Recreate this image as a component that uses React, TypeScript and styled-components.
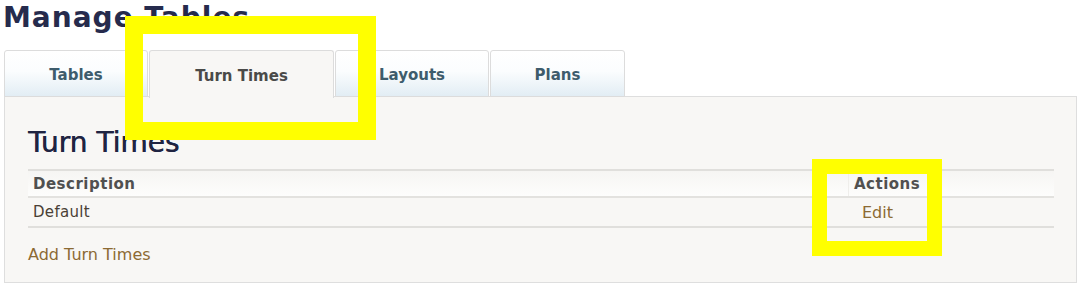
import React from "react";
import styled, { createGlobalStyle } from "styled-components";

const Global = createGlobalStyle`
  html, body { margin: 0; padding: 0; background: #ffffff; }
  body { font-family: "DejaVu Sans", Verdana, sans-serif; }
`;

const Page = styled.div`
  position: relative;
  width: 1081px;
  height: 292px;
  overflow: hidden;
  background: #ffffff;
`;

const Title = styled.h1`
  margin: 2px 0 0 3px;
  font-size: 28px;
  line-height: 32px;
  font-weight: bold;
  color: #262b4d;
  letter-spacing: 1px;
`;

const TabBar = styled.div`
  display: flex;
  margin: 16px 0 0 4px;
  height: 47px;
  position: relative;
  z-index: 1;
`;

const Tab = styled.div<{ $w: number; $active?: boolean }>`
  box-sizing: border-box;
  width: ${(p) => p.$w}px;
  height: ${(p) => (p.$active ? 48 : 47)}px;
  margin-right: 1px;
  display: flex;
  align-items: center;
  justify-content: center;
  padding-top: 3px;
  border: 1px solid #dcdcdc;
  border-bottom: ${(p) => (p.$active ? "none" : "1px solid #dcdcdc")};
  border-radius: 3px 3px 0 0;
  background: ${(p) =>
    p.$active ? "#f8f7f5" : "linear-gradient(#ffffff 0%, #fbfdfe 45%, #e2edf4 100%)"};
  color: ${(p) => (p.$active ? "#4a4a48" : "#3e5c6c")};
  font-size: 15px;
  font-weight: bold;
`;

const Panel = styled.div`
  box-sizing: border-box;
  margin: -1px 0 0 4px;
  width: 1073px;
  border: 1px solid #dedede;
  background: #f8f7f5;
  padding: 31px 22px 17px 23px;
`;

const Heading = styled.h2`
  margin: 0 0 11px 0;
  font-size: 28px;
  line-height: 30px;
  font-weight: normal;
  color: #1f2442;
  text-shadow: 0.5px 0 0 #1f2442;
`;

const Table = styled.div`
  border-top: 2px solid #e0dfdc;
  border-bottom: 2px solid #e0dfdc;
`;

const Row = styled.div<{ $head?: boolean }>`
  display: grid;
  grid-template-columns: 1fr 206px;
  height: ${(p) => (p.$head ? 25 : 28)}px;
  background: ${(p) => (p.$head ? "linear-gradient(#f6f5f3, #fdfdfc)" : "#f8f7f5")};
  & + & {
    border-top: 2px solid #e3e2df;
  }
`;

const Cell = styled.div<{ $head?: boolean; $pad?: number; $sep?: boolean }>`
  display: flex;
  align-items: center;
  padding-left: ${(p) => p.$pad ?? 5}px;
  font-size: 15px;
  letter-spacing: ${(p) => (p.$head ? 0.5 : 0.3)}px;
  font-weight: ${(p) => (p.$head ? "bold" : "normal")};
  color: ${(p) => (p.$head ? "#505050" : "#4a3f35")};
  border-left: ${(p) => (p.$sep ? "1px solid #efeeeb" : "none")};
`;

const Link = styled.a`
  color: #8c6a33;
  font-size: 16px;
  letter-spacing: 0;
  text-decoration: none;
  cursor: pointer;
`;

const AddLink = styled(Link)`
  display: block;
  margin-top: 17px;
  line-height: 20px;
`;

const Highlight = styled.div<{ $x: number; $y: number; $w: number; $h: number; $b: number }>`
  position: absolute;
  box-sizing: border-box;
  left: ${(p) => p.$x}px;
  top: ${(p) => p.$y}px;
  width: ${(p) => p.$w}px;
  height: ${(p) => p.$h}px;
  border: ${(p) => p.$b}px solid #ffff00;
  z-index: 5;
  pointer-events: none;
`;

export default function App() {
  return (
    <Page>
      <Global />
      <Title>Manage Tables</Title>
      <TabBar>
        <Tab $w={144}>Tables</Tab>
        <Tab $w={185} $active>
          Turn Times
        </Tab>
        <Tab $w={154}>Layouts</Tab>
        <Tab $w={135}>Plans</Tab>
      </TabBar>
      <Panel>
        <Heading>Turn Times</Heading>
        <Table>
          <Row $head>
            <Cell $head>Description</Cell>
            <Cell $head $sep>
              Actions
            </Cell>
          </Row>
          <Row>
            <Cell>Default</Cell>
            <Cell $pad={14}>
              <Link>Edit</Link>
            </Cell>
          </Row>
        </Table>
        <AddLink>Add Turn Times</AddLink>
      </Panel>
      <Highlight $x={125} $y={16} $w={251} $h={124} $b={18} />
      <Highlight $x={812} $y={159} $w={130} $h={97} $b={15} />
    </Page>
  );
}
